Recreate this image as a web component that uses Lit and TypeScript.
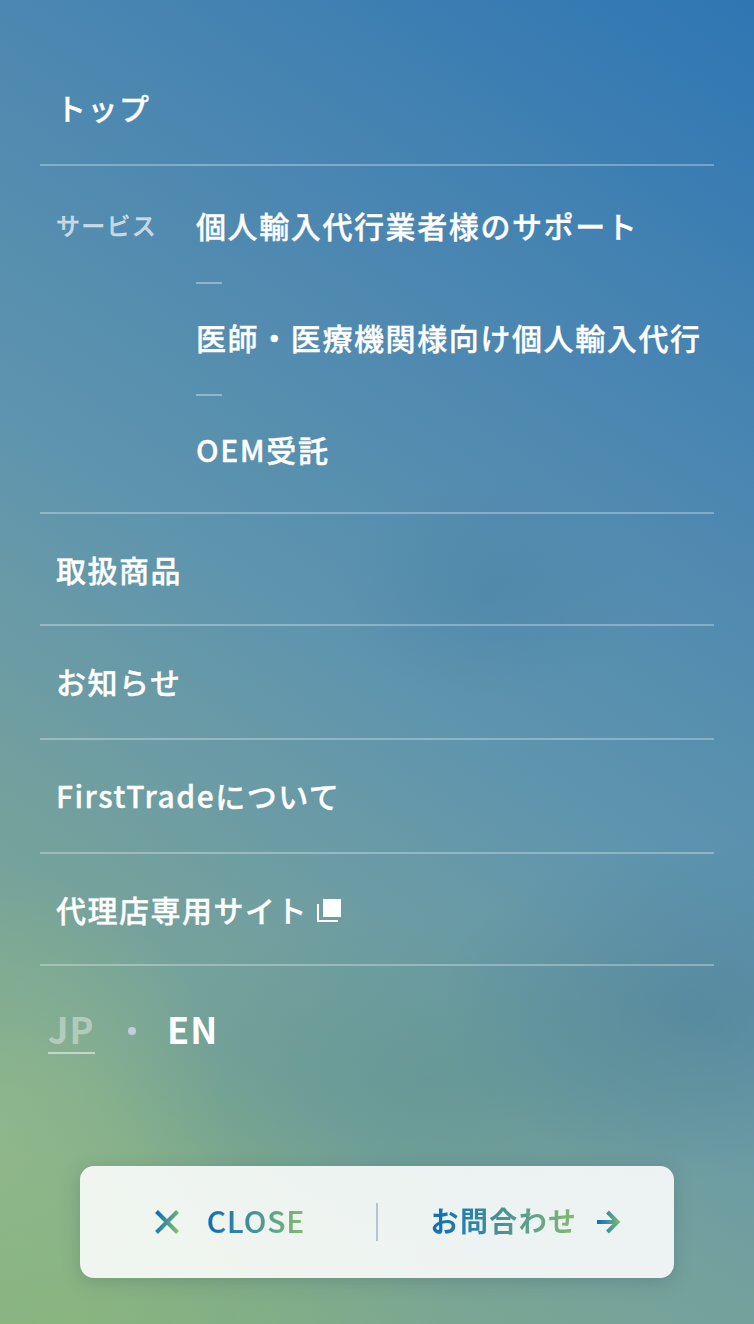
import { LitElement, html, css } from "lit";
import { customElement } from "lit/decorators.js";

@customElement("app-root")
export class AppRoot extends LitElement {
  static styles = css`
    :host { display: block; }
    .page {
      position: relative; width: 754px; height: 1324px; overflow: hidden; box-sizing: border-box;
      padding: 53px 40px 0;
      font-family: "Noto Sans CJK JP", "Noto Sans", sans-serif; font-weight: 500; color: #fff;
      background:
        radial-gradient(ellipse 150px 110px at 490px 590px, rgba(72,128,165,.4), rgba(72,128,165,0)),
        radial-gradient(ellipse 260px 170px at 700px 1010px, rgba(75,125,150,.5), rgba(75,125,150,0)),
        radial-gradient(ellipse 320px 170px at 430px 1080px, rgba(90,145,145,.5), rgba(90,145,145,0)),
        radial-gradient(ellipse 230px 260px at 0px 1130px, rgba(150,188,140,.65), rgba(150,188,140,0)),
        radial-gradient(ellipse 380px 300px at 60px 1324px, rgba(136,182,124,.8), rgba(136,182,124,0)),
        linear-gradient(214deg, #2f76b3 0%, #4a86b1 26%, #6095ad 52%, #73a09e 70%, #85ae86 100%);
    }
    .row { display: block; border-bottom: 2px solid rgba(255,255,255,.3); box-sizing: border-box; padding-left: 16px; font-size: 30px; letter-spacing: 1.5px; line-height: 44px; -webkit-text-stroke: .35px #fff; }
    .top { height: 113px; padding-top: 32px; }
    .service { height: 348px; padding-top: 37px; display: flex; }
    .label { width: 140px; flex: none; font-size: 24px; letter-spacing: 1.25px; line-height: 44px; color: rgba(255,255,255,.68); -webkit-text-stroke: .3px rgba(255,255,255,.68); }
    .subs { display: flex; flex-direction: column; white-space: nowrap; letter-spacing: 1.6px; }
    .dash { width: 26px; height: 2px; margin: 35px 0 31px; background: rgba(255,255,255,.35); }
    .r112 { height: 112px; padding-top: 33px; }
    .r114 { height: 114px; padding-top: 33px; }
    .ext { display: flex; align-items: flex-start; gap: 9px; }
    .ext svg { display: block; margin-top: 12px; }
    .lang { display: flex; align-items: flex-start; margin: 41px 0 0 8px; font-size: 36px; line-height: 42px; letter-spacing: 1px; font-weight: 700; }
    .jp { color: rgba(255,255,255,.4); border-bottom: 2px solid rgba(255,255,255,.5); width: 47px; box-sizing: border-box; height: 47px; }
    .dot { width: 8px; height: 8px; border-radius: 50%; background: rgba(198,208,226,.95); margin: 20px 31px 0 33px; }
    .bar {
      position: absolute; left: 80px; top: 1166px; width: 594px; height: 112px; border-radius: 14px;
      background: rgba(255,255,255,.87); box-shadow: 0 4px 18px rgba(50,80,90,.25);
      display: grid; grid-template-columns: 1fr 2px 1fr; align-items: center;
    }
    .sep { width: 2px; height: 38px; background: #b3c3d0; }
    .btn { display: flex; align-items: center; justify-content: center; }
    .grad { background: linear-gradient(90deg, #0b6dbb, #86bb70); -webkit-background-clip: text; background-clip: text; color: transparent; }
    .close { gap: 28px; padding-left: 4px; }
    .close .grad { font-size: 30px; font-weight: 500; letter-spacing: .9px; line-height: 40px; margin-bottom: 5px; -webkit-text-stroke: .2px transparent; }
    .contact { gap: 19px; padding-right: 1px; }
    .contact .grad { font-size: 28px; font-weight: 700; letter-spacing: 1.4px; line-height: 40px; margin-bottom: 4px; }
  `;

  render() {
    return html`<div class="page">
      <div class="row top">トップ</div>
      <div class="row service">
        <div class="label">サービス</div>
        <div class="subs">
          <div>個人輸入代行業者様のサポート</div>
          <div class="dash"></div>
          <div>医師・医療機関様向け個人輸入代行</div>
          <div class="dash"></div>
          <div>OEM受託</div>
        </div>
      </div>
      <div class="row r112">取扱商品</div>
      <div class="row r114">お知らせ</div>
      <div class="row r114">FirstTradeについて</div>
      <div class="row r112 ext"><span>代理店専用サイト</span>
        <svg width="24" height="23" viewBox="0 0 24 23"><path d="M6 0h18v18H6z" fill="#fff"/><path d="M1 5v17h20" fill="none" stroke="#fff" stroke-width="2"/></svg>
      </div>
      <div class="lang"><span class="jp">JP</span><span class="dot"></span><span>EN</span></div>
      <div class="bar">
        <div class="btn close">
          <svg width="24" height="24" viewBox="0 0 24 24"><defs><linearGradient id="g1" gradientUnits="userSpaceOnUse" x1="0" x2="24" y1="8" y2="16"><stop offset="0" stop-color="#0b6dbb"/><stop offset="1" stop-color="#86bb70"/></linearGradient></defs><path d="M1.5 1.5 22.5 22.5M22.5 1.5 1.5 22.5" stroke="url(#g1)" stroke-width="4" fill="none"/></svg>
          <span class="grad">CLOSE</span>
        </div>
        <div class="sep"></div>
        <div class="btn contact">
          <span class="grad">お問合わせ</span>
          <svg width="24" height="24" viewBox="0 0 24 24"><defs><linearGradient id="g2" gradientUnits="userSpaceOnUse" x1="0" x2="24" y1="0" y2="0"><stop offset="0" stop-color="#0b6dbb"/><stop offset="1" stop-color="#86bb70"/></linearGradient></defs><path d="M0 12H20M10.5 2 20.5 12 10.5 22" stroke="url(#g2)" stroke-width="4" fill="none"/></svg>
        </div>
      </div>
    </div>`;
  }
}
